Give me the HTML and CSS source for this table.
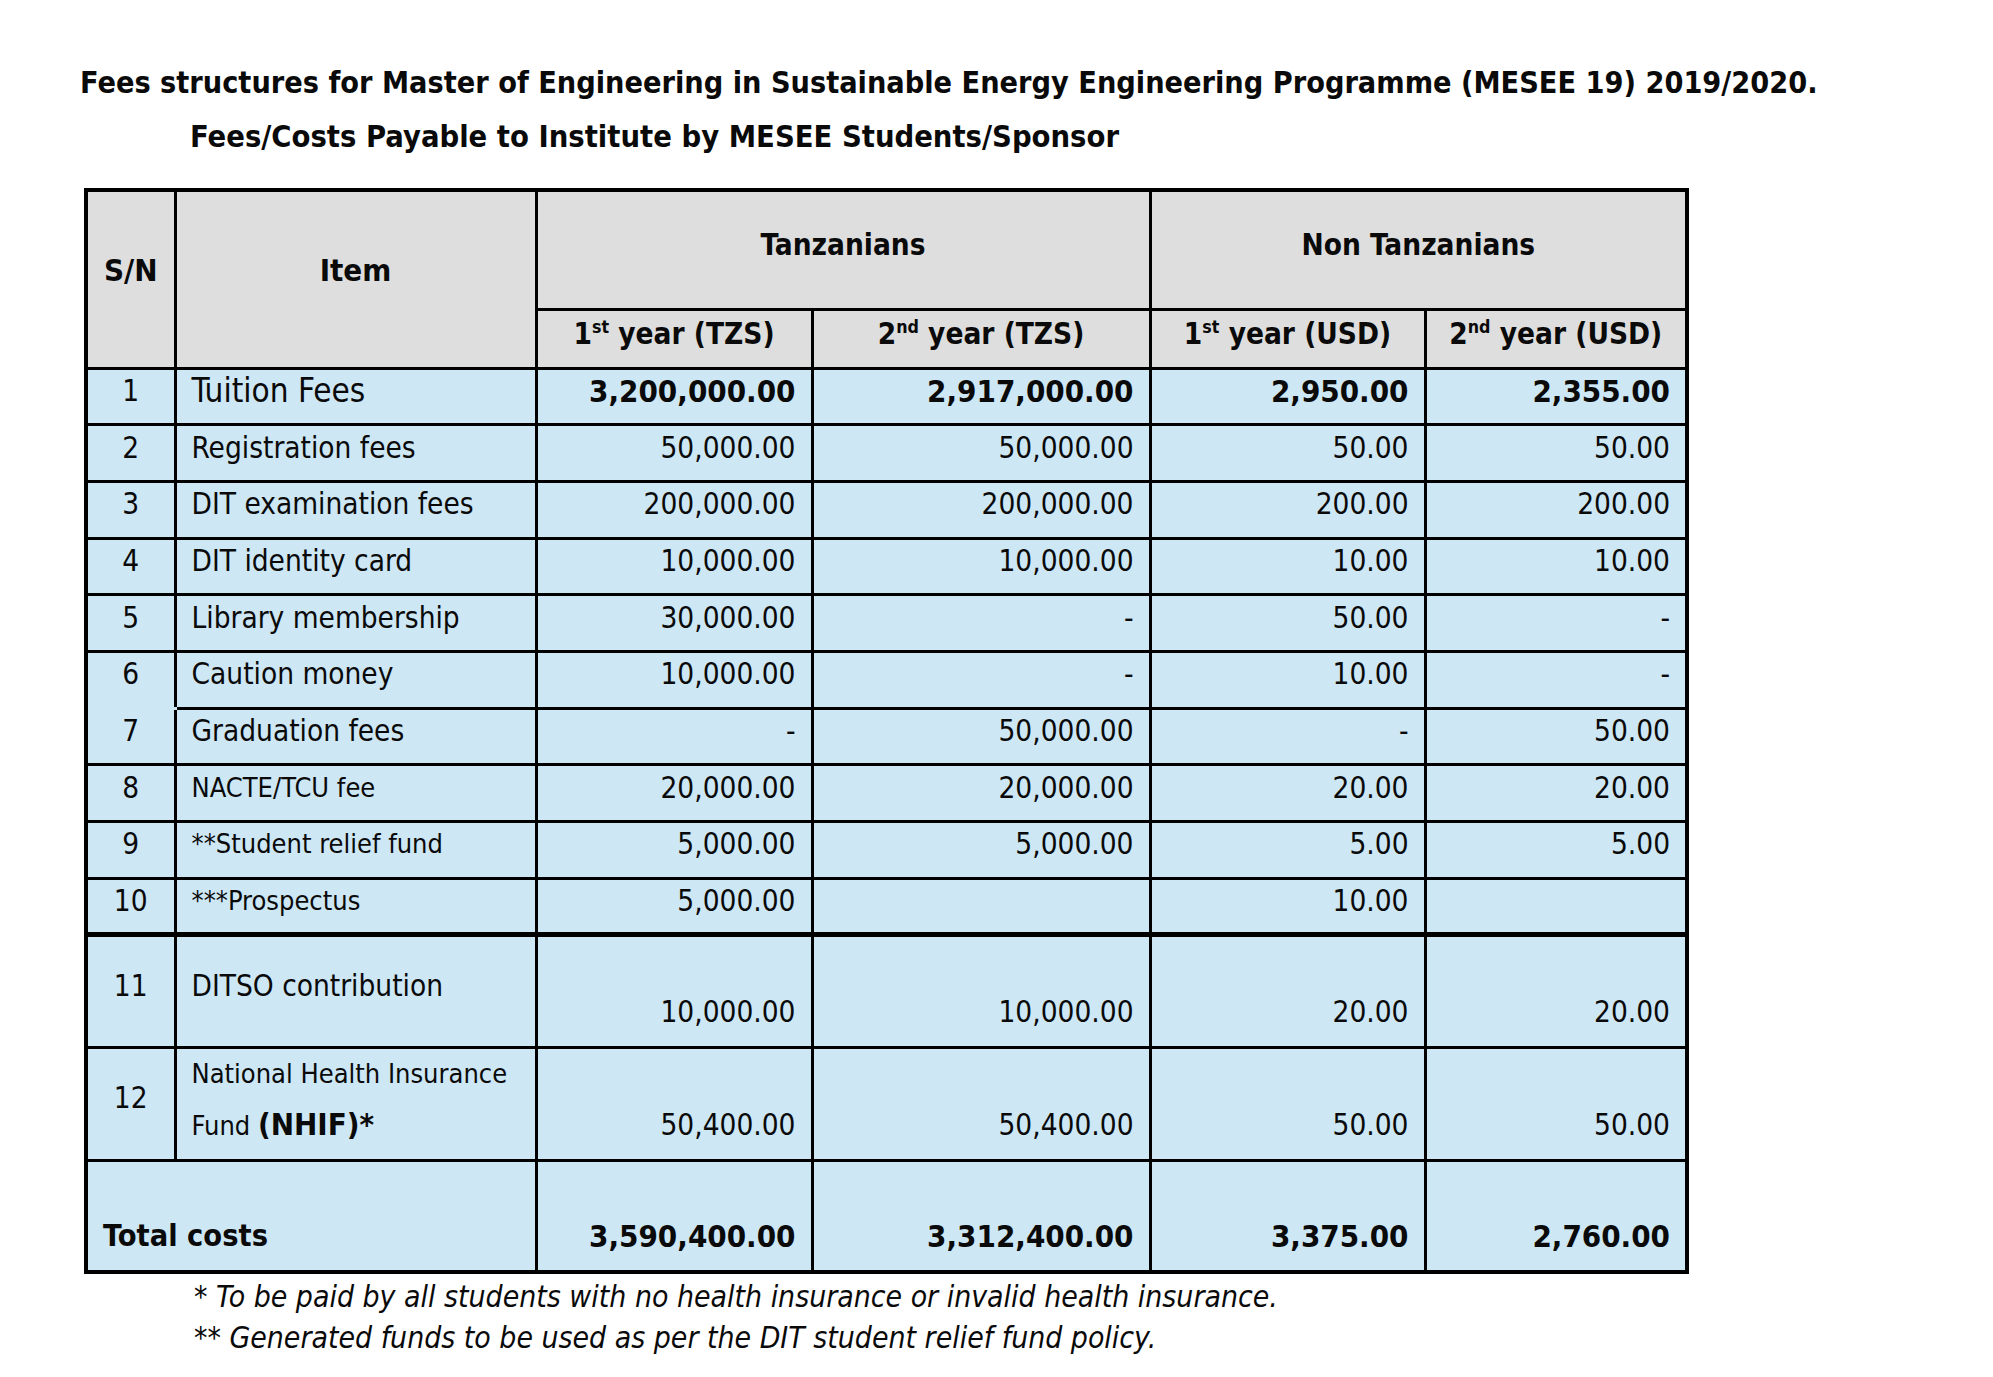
FILE: index.html
```html
<!DOCTYPE html>
<html>
<head>
<meta charset="utf-8">
<link rel="stylesheet" href="styles.css">
</head>
<body>
<div class="page">
  <h1 class="title">Fees structures for Master of Engineering in Sustainable Energy Engineering Programme (MESEE 19) 2019/2020.</h1>
  <h2 class="subtitle">Fees/Costs Payable to Institute by MESEE Students/Sponsor</h2>
  <table class="fees">
    <colgroup>
      <col class="c-sn"><col class="c-item"><col class="c-t1"><col class="c-t2"><col class="c-n1"><col class="c-n2">
    </colgroup>
    <thead>
      <tr class="h1row">
        <th rowspan="2" class="sn-h">S/N</th>
        <th rowspan="2" class="item-h">Item</th>
        <th colspan="2" class="grp">Tanzanians</th>
        <th colspan="2" class="grp">Non Tanzanians</th>
      </tr>
      <tr class="h2row">
        <th>1<sup>st</sup> year (TZS)</th>
        <th>2<sup>nd</sup> year (TZS)</th>
        <th>1<sup>st</sup> year (USD)</th>
        <th>2<sup>nd</sup> year (USD)</th>
      </tr>
    </thead>
    <tbody>
      <tr class="row">
        <td class="sn">1</td><td class="item big">Tuition Fees</td>
        <td class="num b">3,200,000.00</td><td class="num b">2,917,000.00</td><td class="num b">2,950.00</td><td class="num b">2,355.00</td>
      </tr>
      <tr class="row">
        <td class="sn">2</td><td class="item">Registration fees</td>
        <td class="num">50,000.00</td><td class="num">50,000.00</td><td class="num">50.00</td><td class="num">50.00</td>
      </tr>
      <tr class="row">
        <td class="sn">3</td><td class="item">DIT examination fees</td>
        <td class="num">200,000.00</td><td class="num">200,000.00</td><td class="num">200.00</td><td class="num">200.00</td>
      </tr>
      <tr class="row">
        <td class="sn">4</td><td class="item">DIT identity card</td>
        <td class="num">10,000.00</td><td class="num">10,000.00</td><td class="num">10.00</td><td class="num">10.00</td>
      </tr>
      <tr class="row">
        <td class="sn">5</td><td class="item">Library membership</td>
        <td class="num">30,000.00</td><td class="num">-</td><td class="num">50.00</td><td class="num">-</td>
      </tr>
      <tr class="row">
        <td class="sn no-bottom">6</td><td class="item">Caution money</td>
        <td class="num">10,000.00</td><td class="num">-</td><td class="num">10.00</td><td class="num">-</td>
      </tr>
      <tr class="row">
        <td class="sn no-top">7</td><td class="item">Graduation fees</td>
        <td class="num">-</td><td class="num">50,000.00</td><td class="num">-</td><td class="num">50.00</td>
      </tr>
      <tr class="row">
        <td class="sn">8</td><td class="item small">NACTE/TCU fee</td>
        <td class="num">20,000.00</td><td class="num">20,000.00</td><td class="num">20.00</td><td class="num">20.00</td>
      </tr>
      <tr class="row">
        <td class="sn">9</td><td class="item small">**Student relief fund</td>
        <td class="num">5,000.00</td><td class="num">5,000.00</td><td class="num">5.00</td><td class="num">5.00</td>
      </tr>
      <tr class="row last-short">
        <td class="sn">10</td><td class="item small">***Prospectus</td>
        <td class="num">5,000.00</td><td class="num"></td><td class="num">10.00</td><td class="num"></td>
      </tr>
      <tr class="tall">
        <td class="sn">11</td><td class="item">DITSO contribution</td>
        <td class="num low">10,000.00</td><td class="num low">10,000.00</td><td class="num low">20.00</td><td class="num low">20.00</td>
      </tr>
      <tr class="tall">
        <td class="sn">12</td><td class="item small two">National Health Insurance<br>Fund <b class="nhif">(NHIF)*</b></td>
        <td class="num low">50,400.00</td><td class="num low">50,400.00</td><td class="num low">50.00</td><td class="num low">50.00</td>
      </tr>
      <tr class="total">
        <td colspan="2" class="total-label">Total costs</td>
        <td class="num b">3,590,400.00</td><td class="num b">3,312,400.00</td><td class="num b">3,375.00</td><td class="num b">2,760.00</td>
      </tr>
    </tbody>
  </table>
  <p class="note">* To be paid by all students with no health insurance or invalid health insurance.</p>
  <p class="note">** Generated funds to be used as per the DIT student relief fund policy.</p>
</div>
</body>
</html>
```
FILE: styles.css
```css
html, body {
  margin: 0;
  padding: 0;
  background: #ffffff;
}

body {
  font-family: "DejaVu Sans Condensed", "DejaVu Sans", sans-serif;
  font-stretch: condensed;
  color: #0a0a0a;
}

.page {
  width: 1993px;
  height: 1377px;
  overflow: hidden;
}

.title {
  margin: 66px 0 0 0;
  padding-left: 80px;
  font-size: 30.3px;
  line-height: 34px;
  font-weight: bold;
  white-space: nowrap;
}

.subtitle {
  margin: 20px 0 0 0;
  padding-left: 190px;
  font-size: 30.6px;
  line-height: 34px;
  font-weight: bold;
  white-space: nowrap;
}

.fees {
  margin: 34px 0 0 84px;
  border-collapse: collapse;
  table-layout: fixed;
  width: 1601px;
  border: 4px solid #000;
  font-size: 29.5px;
}

.c-sn { width: 89px; }
.c-item { width: 361px; }
.c-t1 { width: 276px; }
.c-t2 { width: 338px; }
.c-n1 { width: 275px; }
.c-n2 { width: 262px; }

.fees th, .fees td {
  border: 3px solid #000;
  padding: 0;
  line-height: 36px;
  overflow: hidden;
  white-space: nowrap;
}

.fees th {
  background: #dedede;
  font-weight: bold;
  text-align: center;
}

.h1row { height: 119px; }
.h2row { height: 59px; }

.grp {
  vertical-align: middle;
  padding-bottom: 10px !important;
}

.sn-h, .item-h {
  padding-bottom: 18px !important;
  font-size: 31px;
}

.h2row th {
  padding-bottom: 9px !important;
}

.fees sup {
  font-size: 0.6em;
  line-height: 0;
  vertical-align: 0.6em;
}

.fees td {
  background: #cde7f5;
}

.row { height: 56.7px; }

.row td {
  vertical-align: middle;
  padding-bottom: 11px;
}

.sn { text-align: center; }

.item {
  text-align: left;
  padding-left: 15px !important;
}

.item.big { font-size: 33px; }
.item.small { font-size: 27px; }

.num {
  text-align: right;
  padding-right: 15px !important;
}

.num.b { font-weight: bold; font-size: 31px; }

.no-bottom { border-bottom-color: #cde7f5 !important; }
.no-top { border-top-color: #cde7f5 !important; }

.last-short td { border-bottom-width: 5px; }

.tall { height: 113px; }

.tall td {
  vertical-align: middle;
  padding-bottom: 12px;
}

.tall td.low {
  vertical-align: bottom;
  padding-bottom: 16px;
}

.item.two {
  line-height: 50px;
  padding-top: 0;
  padding-bottom: 8px;
  vertical-align: bottom;
}

.nhif {
  font-size: 31px;
}

.total { height: 111px; }

.total td {
  vertical-align: bottom;
  padding-bottom: 16px;
}

.total-label {
  font-weight: bold;
  font-size: 30.5px;
  padding-left: 15px !important;
}

.note {
  margin: 2px 0 0 0;
  padding-left: 194px;
  font-style: italic;
  font-size: 29.9px;
  line-height: 41px;
  white-space: nowrap;
}

.note + .note {
  margin-top: 0;
}
```
